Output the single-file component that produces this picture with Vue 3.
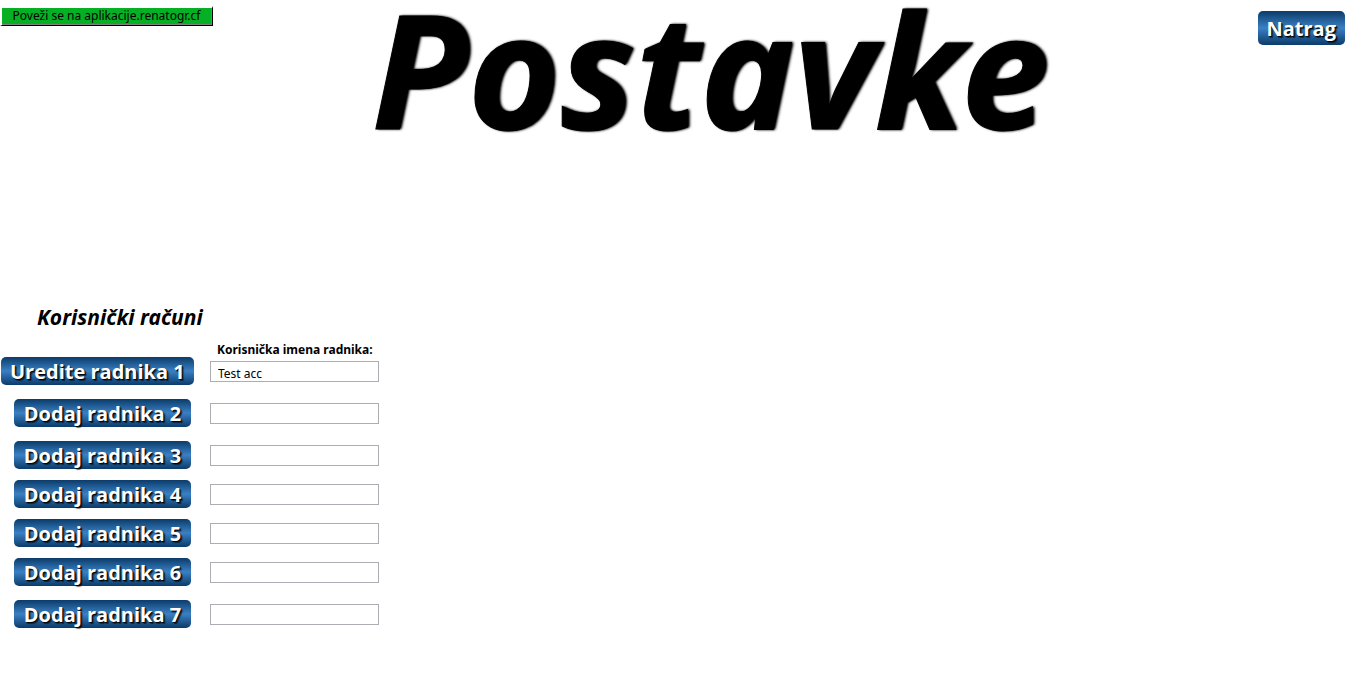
<script setup>
import { ref } from 'vue'

const workers = ref([
  { id: 1, name: 'Test acc', action: 'Uredite' },
  { id: 2, name: '', action: 'Dodaj' },
  { id: 3, name: '', action: 'Dodaj' },
  { id: 4, name: '', action: 'Dodaj' },
  { id: 5, name: '', action: 'Dodaj' },
  { id: 6, name: '', action: 'Dodaj' },
  { id: 7, name: '', action: 'Dodaj' }
])
</script>

<template>
  <main class="page">
    <header class="top">
      <button type="button" class="connect">Poveži se na aplikacije.renatogr.cf</button>
      <h1 class="title">Postavke</h1>
      <button type="button" class="blue back">Natrag</button>
    </header>

    <section class="accounts">
      <h2 class="heading">Korisnički računi</h2>
      <p id="names-label" class="names-label">Korisnička imena radnika:</p>
      <ul class="workers">
        <li v-for="w in workers" :key="w.id" class="worker">
          <div class="action" :class="{ edit: w.action === 'Uredite' }">
            <button :id="`worker-${w.id}`" type="button" class="blue">{{ w.action }} radnika {{ w.id }}</button>
          </div>
          <input v-model="w.name" type="text" class="name" :aria-labelledby="`names-label worker-${w.id}`" />
        </li>
      </ul>
    </section>
  </main>
</template>

<style>
body {
  margin: 0;
  background: #fff;
}
</style>

<style scoped>
.page {
  color: #000;
  font-family: "Noto Sans", "Open Sans", sans-serif;
}

.top {
  display: grid;
  grid-template-columns: 213px 1fr 141px;
  align-items: start;
}

.connect {
  height: 20px;
  margin-top: 6px;
  padding: 0 1px 1px 0;
  border-style: solid;
  border-width: 2px 1px 1px 2px;
  border-color: #fff #000 #000 #fff;
  background: #06b025;
  box-shadow: inset -1px -1px #808080;
  color: #000;
  font: 12px/16px "Noto Sans", sans-serif;
  white-space: nowrap;
}

.title {
  margin: 0;
  font-size: 158px;
  font-style: italic;
  font-weight: 700;
  line-height: 136px;
  text-align: center;
  text-shadow: 1px 0 2px #000, 2px 0 3px #000;
  -webkit-text-stroke: 1px #000;
}

.blue {
  height: 28px;
  padding: 1px 9px 0;
  border: 0;
  border-radius: 5px;
  background: linear-gradient(#0b3b69, #3a80c4 50%, #0b3b69);
  color: #fff;
  font: 700 20px/27px "Open Sans", sans-serif;
  text-shadow: 1px 1px 1px #000, 2px 2px 1px rgba(0, 0, 0, 0.5);
  white-space: nowrap;
}

.back {
  justify-self: end;
  height: 34px;
  margin: 11px 4px 0 0;
  padding-top: 0;
}

.accounts {
  padding-top: 165px;
}

.heading {
  margin: 0 0 0 37px;
  font-size: 21px;
  font-style: italic;
  font-weight: 700;
  line-height: 32px;
}

.names-label {
  margin: 10px 0 0 217px;
  font-size: 12px;
  font-weight: 700;
  line-height: 14px;
}

.workers {
  margin: 0;
  padding: 0;
  list-style: none;
}

.worker {
  display: grid;
  grid-template-columns: 205px 169px;
  column-gap: 5px;
  margin-bottom: 14px;
}

.worker:nth-child(n + 3):nth-child(-n + 5) {
  margin-bottom: 11px;
}

.action {
  display: flex;
  justify-content: center;
}

.action .blue {
  min-width: 177px;
}

.action.edit {
  justify-content: flex-start;
  padding-left: 1px;
}

.name {
  box-sizing: border-box;
  height: 21px;
  margin-top: 4px;
  padding: 3px 7px 0;
  border: 1px solid #abadb3;
  background: #fff;
  color: #000;
  font: 12px/16px "Noto Sans", sans-serif;
}
</style>
